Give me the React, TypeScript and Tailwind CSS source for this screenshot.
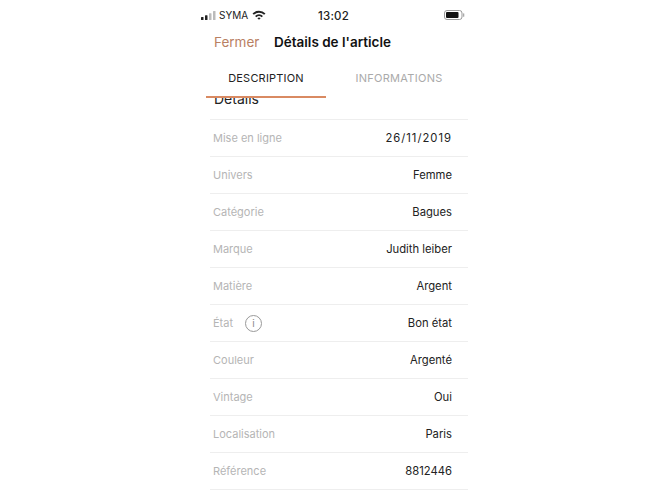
const rows: [string, string][] = [
  ["Mise en ligne", "26/11/2019"],
  ["Univers", "Femme"],
  ["Catégorie", "Bagues"],
  ["Marque", "Judith leiber"],
  ["Matière", "Argent"],
  ["État", "Bon état"],
  ["Couleur", "Argenté"],
  ["Vintage", "Oui"],
  ["Localisation", "Paris"],
  ["Référence", "8812446"],
];

function StatusBar() {
  return (
    <div className="h-[30px] flex items-center relative text-[10px] text-[#222] pl-[11px] pr-[15px]">
      <svg width="16" height="9" viewBox="0 0 16 9">
        <rect x="0" y="6" width="2.5" height="3" rx="0.5" fill="#222" />
        <rect x="4" y="4.2" width="2.5" height="4.8" rx="0.5" fill="#222" />
        <rect x="8" y="2.2" width="2.5" height="6.8" rx="0.5" fill="#bbb" />
        <rect x="12" y="0" width="2.5" height="9" rx="0.5" fill="#bbb" />
      </svg>
      <span className="ml-[2px]">SYMA</span>
      <svg className="ml-[4px]" width="14" height="10" viewBox="0 0 14 10">
        <path d="M0.5 3.4 A9.2 9.2 0 0 1 13.5 3.4 L12.1 4.8 A7.2 7.2 0 0 0 1.9 4.8 Z" fill="#222" />
        <path d="M3 5.9 A5.7 5.7 0 0 1 11 5.9 L9.6 7.3 A3.7 3.7 0 0 0 4.4 7.3 Z" fill="#222" />
        <path d="M5.4 8.2 A2.3 2.3 0 0 1 8.6 8.2 L7 9.8 Z" fill="#222" />
      </svg>
      <span className="absolute left-[128px] top-[8px] text-[11.5px] font-medium tracking-[0.2px]">13:02</span>
      <svg className="ml-auto" width="21" height="10" viewBox="0 0 21 10">
        <rect x="0.5" y="0.5" width="17.5" height="9" rx="2.5" fill="none" stroke="#999" />
        <rect x="2" y="2" width="12.5" height="6" rx="1" fill="#111" />
        <rect x="19" y="3.2" width="1.3" height="3.6" rx="0.6" fill="#aaa" />
      </svg>
    </div>
  );
}

export default function App() {
  return (
    <div className="w-[670px] h-[500px] bg-white overflow-hidden flex justify-center font-['Inter','Liberation_Sans',sans-serif]">
      <div className="w-[290px] h-[500px] overflow-hidden flex flex-col">
        <StatusBar />
        <div className="h-[25px] flex items-center pl-[24px] text-[13.5px]">
          <span className="text-[#b98063] w-[60px]">Fermer</span>
          <span className="text-[#111] font-semibold text-[13.5px]">Détails de l'article</span>
        </div>
        <div className="relative z-10 bg-white h-[43px] flex pl-[16px]">
          <div className="w-[120px] h-[43px] border-b-2 border-[#d98a62] flex justify-center pt-[15px] text-[11px] text-[#222] tracking-[0.2px]">DESCRIPTION</div>
          <div className="w-[146px] flex justify-center pt-[15px] text-[11px] text-[#aaa] tracking-[0.3px]">INFORMATIONS</div>
        </div>
        <div className="h-[28px] overflow-hidden pl-[24px] -mt-[7px]">
          <div className="text-[14px] text-[#222] leading-[16px]">Détails</div>
        </div>
        <div className="ml-[20px] mr-[12px] border-t border-[#eee]">
          {rows.map(([label, value]) => (
            <div key={label} className="h-[37px] border-b border-[#eee] flex items-center justify-between pl-[3px] pr-[16px] text-[11.25px]">
              <span className="flex items-center text-[#b5b5b5] text-[11px]">
                {label}
                {label === "État" && (
                  <span className="ml-[12px] w-[17px] h-[17px] rounded-full border border-[#999] flex items-center justify-center text-[10px] text-[#888]">i</span>
                )}
              </span>
              <span className={value === "26/11/2019" ? "text-[#222] tracking-[1px]" : "text-[#222]"}>{value}</span>
            </div>
          ))}
        </div>
      </div>
    </div>
  );
}
